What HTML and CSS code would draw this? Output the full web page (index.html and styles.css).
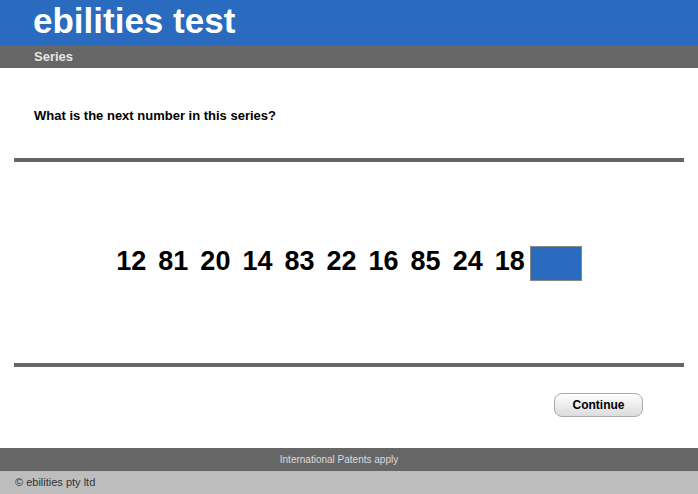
FILE: index.html
```html
<!DOCTYPE html>
<html lang="en">
  <head>
    <meta charset="UTF-8" />
    <meta name="viewport" content="width=device-width, initial-scale=1.0" />
    <title>ebilities test</title>
    <link rel="stylesheet" href="styles.css">
  </head>
  <body>
    <header class="top">
      <h1 class="top-title">ebilities test</h1>
    </header>
    <div class="sub-bar">Series</div>

    <main class="test">
      <p class="test-question">What is the next number in this series?</p>
      <hr class="test-rule" />
      <div class="series">
        <span class="series-num">12</span>
        <span class="series-num">81</span>
        <span class="series-num">20</span>
        <span class="series-num">14</span>
        <span class="series-num">83</span>
        <span class="series-num">22</span>
        <span class="series-num">16</span>
        <span class="series-num">85</span>
        <span class="series-num">24</span>
        <span class="series-num">18</span>
        <span class="series-answer"></span>
      </div>
      <hr class="test-rule" />
      <div class="test-actions">
        <button class="btn" type="button">Continue</button>
      </div>
    </main>

    <footer>
      <div class="footer-patents">International Patents apply</div>
      <div class="footer-copy">&copy; ebilities pty ltd</div>
    </footer>
  </body>
</html>
```

FILE: styles.css
```css
:root {
  --main-font: "Liberation Sans", Arial, sans-serif;
  --main-color: #2a6bbf;
  --second-color: #666;
  --light-color: #bdbdbd;
}
html {
  box-sizing: border-box;
  font-family: var(--main-font);
}

*,
*:before,
*:after {
  box-sizing: inherit;
}

body {
  margin: 0;
  width: 698px;
  height: 494px;
  overflow: hidden;
  background-color: #fff;
}

.top {
  height: 45px;
  background-color: var(--main-color);
  padding-left: 33px;
}

.top-title {
  margin: 0;
  font-size: 35px;
  line-height: 42px;
  color: #fff;
}

.sub-bar {
  height: 23px;
  line-height: 23px;
  padding-left: 34px;
  background-color: var(--second-color);
  color: #e6e6e6;
  font-size: 13px;
  font-weight: bold;
}

.test {
  margin: 0 14px;
}

.test-question {
  margin: 0;
  padding: 40px 0 0 20px;
  height: 90px;
  font-size: 13px;
  line-height: 16px;
  font-weight: bold;
  color: #000;
}

.test-rule {
  margin: 0;
  border: 0;
  height: 4px;
  background-color: var(--second-color);
}

.series {
  height: 201px;
  display: flex;
  align-items: center;
  justify-content: center;
  padding-top: 1px;
}

.series-num {
  font-size: 27px;
  line-height: 30px;
  font-weight: bold;
  color: #000;
  margin: 0 12px 4px 0;
}

.series-num:nth-child(10) {
  margin-right: 5px;
}

.series-answer {
  width: 52px;
  height: 35px;
  background-color: var(--main-color);
  border: 1px solid #888;
}

.test-actions {
  height: 81px;
  display: flex;
  justify-content: flex-end;
  align-items: flex-start;
  padding: 26px 41px 0 0;
}

.btn {
  width: 89px;
  height: 24px;
  border: 1px solid #aaa;
  border-radius: 8px;
  background: linear-gradient(#fff, #e9e9e9 60%, #dcdcdc);
  font-family: var(--main-font);
  font-size: 12px;
  font-weight: bold;
  color: #000;
  cursor: pointer;
}

.footer-patents {
  height: 23px;
  line-height: 23px;
  padding-right: 20px;
  text-align: center;
  background-color: var(--second-color);
  color: #ddd;
  font-size: 10px;
}

.footer-copy {
  height: 23px;
  line-height: 23px;
  padding-left: 15px;
  background-color: var(--light-color);
  color: #333;
  font-size: 11px;
}
```
